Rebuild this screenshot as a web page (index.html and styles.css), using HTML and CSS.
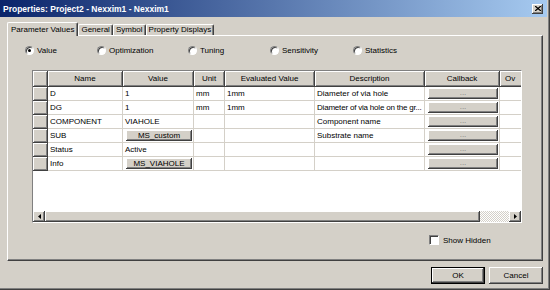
FILE: index.html
```html
<!DOCTYPE html>
<html lang="en">
<head>
  <meta charset="UTF-8" />
  <title>Properties: Project2 - Nexxim1 - Nexxim1</title>
  <link rel="stylesheet" href="styles.css">
</head>
<body>

  <div class="window">
    <div class="titlebar">
      <span class="title">Properties: Project2 - Nexxim1 - Nexxim1</span>
      <button class="close">
        <svg width="6" height="5" viewBox="0 0 6 5"><path d="M0 0L6 5M0 5L6 0" stroke="#000" stroke-width="1.3"/></svg>
      </button>
    </div>

    <div class="content">
      <div class="tabs">
        <div class="tab active">Parameter Values</div>
        <div class="tab">General</div>
        <div class="tab">Symbol</div>
        <div class="tab">Property Displays</div>
      </div>

      <div class="panel">
        <div class="radios">
          <label class="radio"><span class="dot checked"></span>Value</label>
          <label class="radio"><span class="dot"></span>Optimization</label>
          <label class="radio"><span class="dot"></span>Tuning</label>
          <label class="radio"><span class="dot"></span>Sensitivity</label>
          <label class="radio"><span class="dot"></span>Statistics</label>
        </div>

        <div class="grid">
          <div class="grid-body">
            <table>
              <colgroup>
                <col style="width:15px"><col style="width:75px"><col style="width:71px"><col style="width:31px">
                <col style="width:90px"><col style="width:110px"><col style="width:75px"><col style="width:60px">
              </colgroup>
              <tr class="head">
                <th></th><th>Name</th><th>Value</th><th>Unit</th><th>Evaluated Value</th><th>Description</th><th>Callback</th><th class="cut">Ov</th>
              </tr>
              <tr>
                <th></th><td>D</td><td>1</td><td>mm</td><td>1mm</td><td>Diameter of via hole</td><td><span class="cell-btn">...</span></td><td></td>
              </tr>
              <tr>
                <th></th><td>DG</td><td>1</td><td>mm</td><td>1mm</td><td class="tight">Diameter of via hole on the gr...</td><td><span class="cell-btn">...</span></td><td></td>
              </tr>
              <tr>
                <th></th><td>COMPONENT</td><td>VIAHOLE</td><td></td><td></td><td>Component name</td><td><span class="cell-btn">...</span></td><td></td>
              </tr>
              <tr>
                <th></th><td>SUB</td><td><span class="cell-btn value">MS_custom</span></td><td></td><td></td><td>Substrate name</td><td><span class="cell-btn">...</span></td><td></td>
              </tr>
              <tr>
                <th></th><td>Status</td><td>Active</td><td></td><td></td><td></td><td><span class="cell-btn">...</span></td><td></td>
              </tr>
              <tr>
                <th></th><td>Info</td><td><span class="cell-btn value">MS_VIAHOLE</span></td><td></td><td></td><td></td><td><span class="cell-btn">...</span></td><td></td>
              </tr>
            </table>
          </div>
          <div class="hscroll">
            <span class="arrow left"><svg width="3" height="5" viewBox="0 0 3 5"><path d="M3 0V5L0 2.5Z" fill="#000"/></svg></span>
            <span class="thumb"></span>
            <span class="track"></span>
            <span class="arrow right"><svg width="3" height="5" viewBox="0 0 3 5"><path d="M0 0V5L3 2.5Z" fill="#000"/></svg></span>
          </div>
        </div>

        <label class="check"><span class="box"></span>Show Hidden</label>
      </div>

      <div class="actions">
        <button class="btn default">OK</button>
        <button class="btn">Cancel</button>
      </div>
    </div>
  </div>

</body>
</html>
```

FILE: styles.css
```css
* {
  box-sizing: border-box;
  margin: 0;
  padding: 0;
}

body {
  width: 550px;
  height: 290px;
  background: #d4d0c8;
  font-family: 'Liberation Sans', Arial, sans-serif;
  font-size: 8px;
  color: #000;
  overflow: hidden;
}

.window {
  width: 550px;
  height: 290px;
  background: #d4d0c8;
  border-right: 1px solid #404040;
  border-bottom: 1px solid #404040;
  box-shadow: inset -1px -1px 0 #808080;
  display: flex;
  flex-direction: column;
}

.titlebar {
  height: 17px;
  margin-right: 2px;
  background: linear-gradient(to right, #0a246a 0%, #a6caf0 100%);
  display: flex;
  align-items: center;
  justify-content: space-between;
  padding: 0 4px 0 3px;
}

.title {
  color: #fff;
  font-weight: bold;
  font-size: 8.5px;
}

.close {
  width: 11px;
  height: 10px;
  background: #d4d0c8;
  border: none;
  box-shadow: inset -1px -1px 0 #404040, inset 1px 1px 0 #fff, inset -2px -2px 0 #808080;
  display: flex;
  align-items: center;
  justify-content: center;
  padding-bottom: 1px;
}

.content {
  flex: 1;
  padding: 5px 6px 0 7px;
  display: flex;
  flex-direction: column;
}

.tabs {
  display: flex;
  height: 13px;
  align-items: flex-end;
}

.tab {
  height: 11px;
  padding: 0 2px;
  line-height: 10px;
  border-top: 1px solid #fff;
  border-left: 1px solid #fff;
  border-right: 1px solid #404040;
  box-shadow: inset -1px 0 0 #808080;
  border-radius: 2px 2px 0 0;
}

.tab.active {
  height: 14px;
  margin-bottom: -1px;
  padding: 0 3px;
  line-height: 13px;
  background: #d4d0c8;
  position: relative;
  z-index: 1;
}

.panel {
  height: 226px;
  width: 536px;
  border-top: 1px solid #fff;
  border-left: 1px solid #fff;
  border-right: 1px solid #404040;
  border-bottom: 1px solid #404040;
  box-shadow: inset -1px -1px 0 #808080;
  padding: 8px 0 0 17px;
  display: flex;
  flex-direction: column;
}

.radios {
  display: grid;
  grid-template-columns: 72px 91px 82px 83px auto;
  height: 12px;
  align-items: center;
}

.radio {
  display: flex;
  align-items: center;
  gap: 3px;
}

.dot {
  width: 9px;
  height: 9px;
  border-radius: 50%;
  background: #fff;
  border: 1px solid;
  border-color: #808080 #fff #fff #808080;
  box-shadow: inset 1px 1px 0 #404040;
  display: flex;
  align-items: center;
  justify-content: center;
}

.dot.checked::after {
  content: '';
  width: 3px;
  height: 3px;
  border-radius: 50%;
  background: #000;
}

.grid {
  margin: 14px 0 0 7px;
  width: 490px;
  height: 153px;
  border-top: 1px solid #808080;
  border-left: 1px solid #808080;
  border-right: 1px solid #fff;
  border-bottom: 1px solid #fff;
  display: flex;
  flex-direction: column;
}

.grid-body {
  flex: 1;
  background: #fff;
  overflow: hidden;
}

table {
  table-layout: fixed;
  border-collapse: separate;
  border-spacing: 0;
  width: 527px;
}

tr {
  height: 14px;
}

tr.head {
  height: 16px;
}

th {
  background: #d4d0c8;
  font-weight: normal;
  text-align: center;
  border-right: 1px solid #404040;
  border-bottom: 1px solid #404040;
  box-shadow: inset 1px 1px 0 #fff, inset -1px -1px 0 #808080;
}

th.cut {
  text-align: left;
  padding-left: 5px;
}

td {
  padding: 0 2px;
  border-right: 1px solid #d4d0c8;
  border-bottom: 1px solid #d4d0c8;
  white-space: nowrap;
  overflow: hidden;
}

td.tight {
  letter-spacing: -0.2px;
  padding-right: 0;
}

.cell-btn {
  display: flex;
  align-items: flex-end;
  justify-content: center;
  height: 11px;
  padding-bottom: 2px;
  background: #d4d0c8;
  box-shadow: inset -1px -1px 0 #404040, inset 1px 1px 0 #fff, inset -2px -2px 0 #808080;
  color: #808080;
  font-size: 8px;
  line-height: 8px;
  margin: 0 -1px 0 1px;
}

.cell-btn.value {
  color: #000;
  align-items: center;
  padding-bottom: 0;
  line-height: 11px;
}

.hscroll {
  height: 11px;
  display: flex;
  background: #d4d0c8;
}

.arrow {
  width: 12px;
  display: flex;
  align-items: center;
  justify-content: center;
  box-shadow: inset -1px -1px 0 #404040, inset 1px 1px 0 #fff, inset -2px -2px 0 #808080;
}

.thumb {
  width: 435px;
  box-shadow: inset -1px -1px 0 #404040, inset 1px 1px 0 #fff, inset -2px -2px 0 #808080;
}

.track {
  flex: 1;
  background-color: #fff;
  background-image: linear-gradient(45deg, #d4d0c8 25%, transparent 25%, transparent 75%, #d4d0c8 75%),
    linear-gradient(45deg, #d4d0c8 25%, transparent 25%, transparent 75%, #d4d0c8 75%);
  background-size: 2px 2px;
  background-position: 0 0, 1px 1px;
}

.check {
  margin: 12px 0 0 404px;
  display: flex;
  align-items: center;
  gap: 4px;
  height: 10px;
}

.box {
  width: 10px;
  height: 10px;
  background: #fff;
  border: 1px solid;
  border-color: #808080 #fff #fff #808080;
  box-shadow: inset 1px 1px 0 #404040;
}

.actions {
  display: flex;
  justify-content: flex-end;
  gap: 4px;
  margin-top: 6px;
  width: 536px;
}

.btn {
  width: 54px;
  height: 17px;
  background: #d4d0c8;
  border: none;
  font-family: 'Liberation Sans', Arial, sans-serif;
  font-size: 8px;
  box-shadow: inset -1px -1px 0 #404040, inset 1px 1px 0 #fff, inset -2px -2px 0 #808080;
}

.btn.default {
  border: 1px solid #000;
}
```
